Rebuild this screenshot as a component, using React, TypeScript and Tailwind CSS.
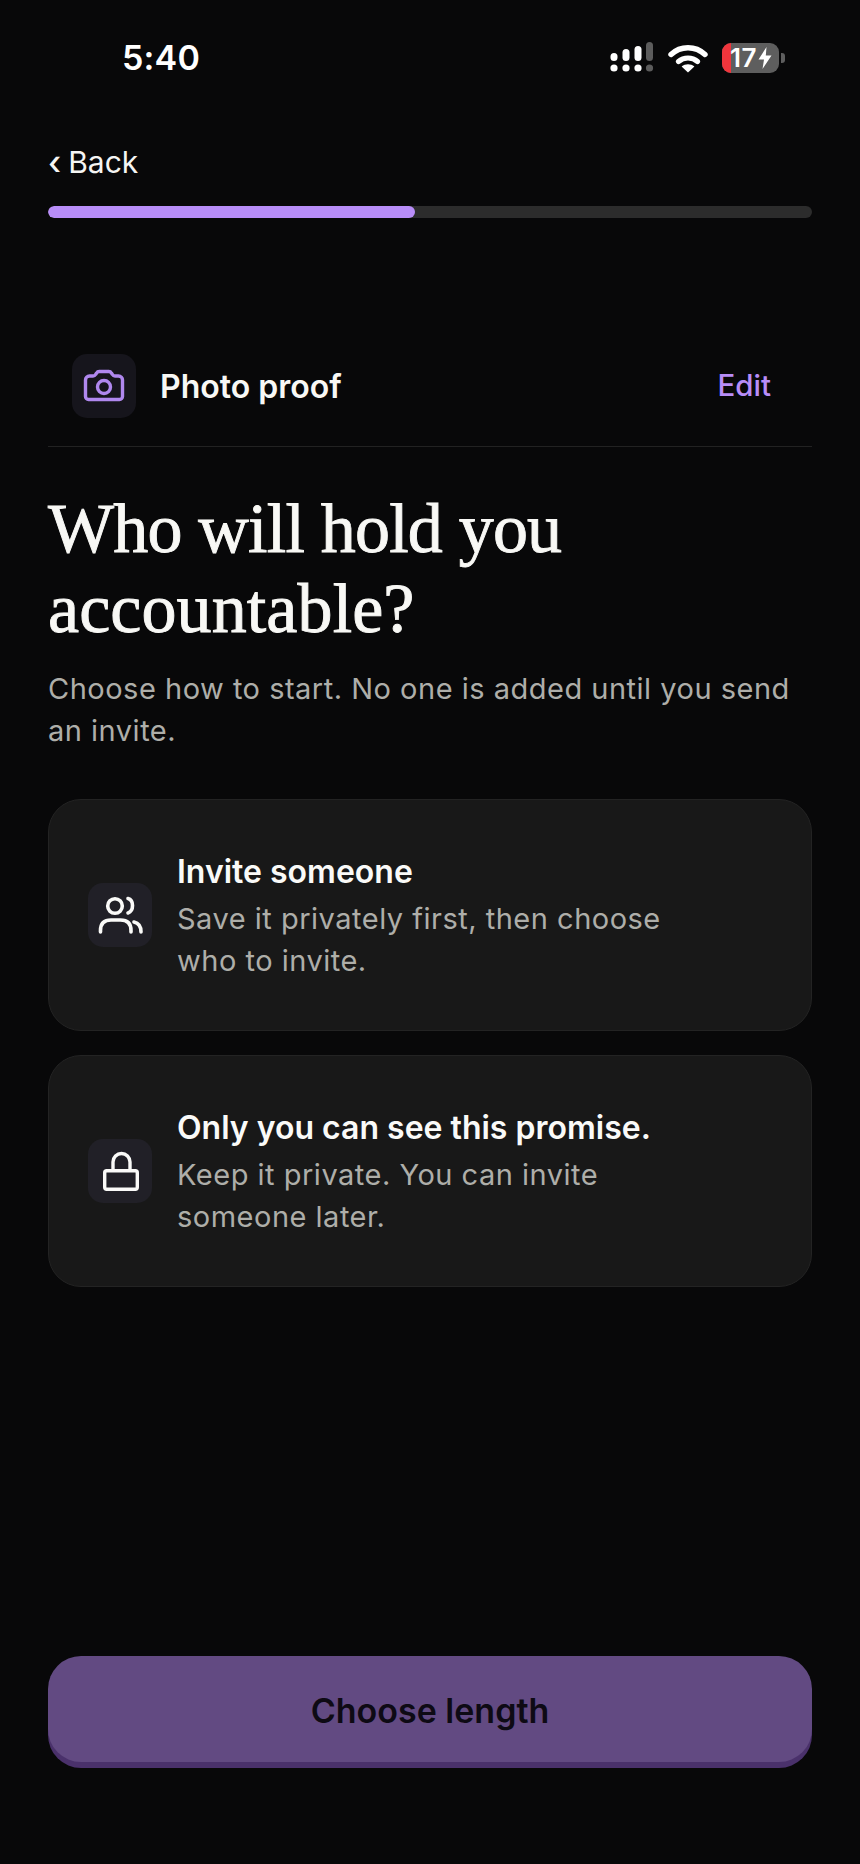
function Signal() {
  const cols = [
    { x: 610.5, top: 53, fill: "#ffffff" },
    { x: 622.5, top: 49, fill: "#ffffff" },
    { x: 634.5, top: 46, fill: "#ffffff" },
    { x: 646, top: 42, fill: "#5c5c5c" },
  ];
  return (
    <svg width="44" height="32" viewBox="610 42 44 32" className="block">
      {cols.map((c) => (
        <g key={c.x} fill={c.fill}>
          <rect x={c.x} y={c.top} width="7" height={61 - c.top} rx="3.5" />
          <circle cx={c.x + 3.5} cy="68" r="3.6" />
        </g>
      ))}
    </svg>
  );
}

function Wifi() {
  return (
    <svg width="40" height="30" viewBox="0 0 40 30" fill="none" className="block">
      <path d="M3 11.5C12.5 2.5 27.5 2.5 37 11.5" stroke="#fff" strokeWidth="5.4" strokeLinecap="round" />
      <path d="M10.5 18.5C15.8 13.8 24.2 13.8 29.5 18.5" stroke="#fff" strokeWidth="5.2" strokeLinecap="round" />
      <path d="M20 29.5L13.6 23.4C17.2 20.4 22.8 20.4 26.4 23.4Z" fill="#fff" />
    </svg>
  );
}

function Battery() {
  return (
    <div className="flex items-center gap-[2px]">
      <div className="relative flex h-[30px] w-[57px] items-center overflow-hidden rounded-[9px] bg-[#5e5e5e] pl-[8px]">
        <div className="absolute inset-y-0 left-0 w-[9px] bg-[#f0353c]" />
        <span className="relative text-[26px] leading-[30px] font-semibold tracking-[0.5px] text-white">17</span>
        <svg width="14" height="22" viewBox="0 0 14 22" className="relative ml-[1px]">
          <path d="M8.5 0L0.5 12.5H6L4.5 22L13.5 8.5H7.8Z" fill="#fff" />
        </svg>
      </div>
      <div className="h-[10px] w-[4px] rounded-r-[3px] bg-[#5e5e5e]" />
    </div>
  );
}

function CameraIcon() {
  return (
    <svg width="64" height="64" viewBox="0 0 64 64" fill="none" stroke="#b088ee" strokeWidth="3.4" strokeLinejoin="round">
      <path d="M13.5 26a4 4 0 0 1 4-4H21a3 3 0 0 0 2.6-1.5l1-1.5a3 3 0 0 1 2.6-1.5h9.6a3 3 0 0 1 2.6 1.5l1 1.5A3 3 0 0 0 43 22h3.5a4 4 0 0 1 4 4V42.5a3 3 0 0 1-3 3H16.5a3 3 0 0 1-3-3Z" />
      <circle cx="32" cy="33" r="6.5" />
    </svg>
  );
}

function UsersIcon() {
  return (
    <svg width="64" height="64" viewBox="0 0 64 64" fill="none" stroke="#fafaf8" strokeWidth="3.6" strokeLinecap="round">
      <circle cx="27" cy="23" r="7.3" />
      <path d="M12.5 49V47.5Q12.5 37 23 37H32.5Q43 37 43 47.5V49" />
      <path d="M40 15.5C46 17 46 28 40 30" />
      <path d="M46 39C50.5 40 53 44 53 49" />
    </svg>
  );
}

function LockIcon() {
  return (
    <svg width="64" height="64" viewBox="0 0 64 64" fill="none" stroke="#fafaf8" strokeWidth="3.4" strokeLinejoin="round">
      <rect x="16.7" y="31.7" width="32.6" height="18.6" rx="2" />
      <path d="M25 31V23a8.5 8.5 0 0 1 17 0V31" />
    </svg>
  );
}

function OptionCard({
  icon,
  title,
  lines,
}: {
  icon: React.ReactNode;
  title: string;
  lines: [string, string];
}) {
  return (
    <div className="flex h-[232px] items-center rounded-[33px] border border-[#232323] bg-[#181818] pl-[39px]">
      <div className="flex h-[64px] w-[64px] shrink-0 items-center justify-center rounded-[15px] bg-[#212027]">
        {icon}
      </div>
      <div className="mt-[3px] ml-[25px]">
        <div className="mb-[5px] text-[32px] leading-[42px] font-semibold text-[#fafaf8]">{title}</div>
        <div className="text-[29px] leading-[42px] tracking-[0.5px] text-[#aeaea9]">
          {lines[0]}
          <br />
          {lines[1]}
        </div>
      </div>
    </div>
  );
}

export default function App() {
  return (
    <div className="flex h-[1864px] w-[860px] flex-col overflow-hidden bg-[#080809] font-['Inter',sans-serif] text-white">
      <div className="flex h-[116px] shrink-0 items-start justify-between pt-[38px] pr-[75px] pl-[122px]">
        <span className="text-[34px] leading-[40px] font-semibold tracking-[0.2px] text-white">5:40</span>
        <div className="mt-[4px] flex items-center gap-[14px]">
          <Signal />
          <Wifi />
          <Battery />
        </div>
      </div>

      <div className="flex flex-1 flex-col px-[48px]">
        <div className="flex h-[90px] shrink-0 items-center pt-[24px] pb-[22px] text-[30px] leading-[36px] text-[#f5f5f3]">
          <span className="mr-[7px] text-[33px] font-medium">‹</span>
          <span>Back</span>
        </div>

        <div className="h-[12px] w-full overflow-hidden rounded-full bg-[#2c2c2c]">
          <div className="h-full w-[367px] rounded-full bg-[#b88df8]" />
        </div>

        <div className="mt-[136px] flex h-[93px] items-start justify-between border-b border-[#222222] pr-[41px] pl-[24px]">
          <div className="flex items-center gap-[24px]">
            <div className="flex h-[64px] w-[64px] items-center justify-center rounded-[15px] bg-[#16151c]">
              <CameraIcon />
            </div>
            <span className="pt-[2px] text-[32px] font-semibold text-[#f8f8f5]">Photo proof</span>
          </div>
          <span className="mt-[12px] text-[29.5px] leading-[38px] font-medium text-[#b88df8]">Edit</span>
        </div>

        <h1 className="mt-[42px] font-['Liberation_Serif',serif] text-[70px] leading-[80px] font-normal text-[#f8f8f5] [-webkit-text-stroke:0.9px_#f8f8f5]">
          <span className="block tracking-[-0.8px]">Who will hold you</span>
          <span className="block tracking-[0.1px]">accountable?</span>
        </h1>

        <p className="mt-[19px] text-[29px] leading-[42px] tracking-[0.5px] text-[#aeaea9]">
          Choose how to start. No one is added until you send
          <br />
          an invite.
        </p>

        <div className="mt-[47px] flex flex-col gap-[24px]">
          <OptionCard
            icon={<UsersIcon />}
            title="Invite someone"
            lines={["Save it privately first, then choose", "who to invite."]}
          />
          <OptionCard
            icon={<LockIcon />}
            title="Only you can see this promise."
            lines={["Keep it private. You can invite", "someone later."]}
          />
        </div>

        <button className="mt-auto mb-[102px] flex h-[106px] shrink-0 items-center justify-center rounded-[33px] bg-[#624a82] pt-[3px] text-[34px] font-semibold text-[#0e0a14] shadow-[0_6px_0_#4a316b]">
          Choose length
        </button>
      </div>
    </div>
  );
}
